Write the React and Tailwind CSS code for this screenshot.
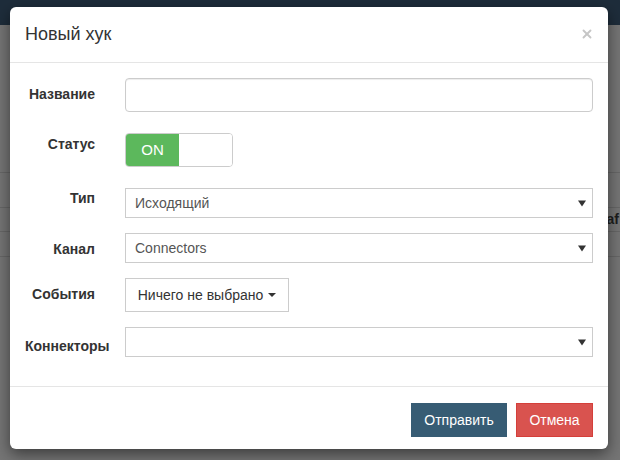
import { X } from "lucide-react";

const font = { fontFamily: '"Liberation Sans", Arial, sans-serif' };

function Caret({ className = "" }) {
  return (
    <svg width="8" height="7" viewBox="0 0 8 7" className={className}>
      <path d="M0 0.5h8L4 6.5z" fill="#333" />
    </svg>
  );
}

function SelectBox({ value }) {
  return (
    <div className="flex h-[30px] w-full items-center justify-between border border-[#ccc] bg-white pl-[9px] pr-[6px] text-[14px] text-[#555]">
      <span>{value}</span>
      <Caret />
    </div>
  );
}

function Row({ label, pt, children, className = "" }) {
  return (
    <div className={`flex items-start ${className}`}>
      <div
        className={`w-[70px] shrink-0 whitespace-nowrap text-right text-[14px] font-bold leading-5 text-[#333] ${pt}`}
      >
        {label}
      </div>
      <div className="ml-[30px] min-w-0 flex-1">{children}</div>
    </div>
  );
}

export default function App() {
  return (
    <div className="relative h-[460px] w-[620px] overflow-hidden bg-[#757575]" style={font}>
      {/* page behind the overlay */}
      <div className="h-[25px] bg-[#1e2d3b]" />
      <div className="h-[147px]" />
      <div className="h-[35px] border-t border-[#676767]" />
      <div className="flex h-[24px] items-center justify-end border-t border-[#676767] pr-[1px]">
        <span className="text-[14px] font-bold text-[#1d1d1d]">af</span>
      </div>
      <div className="h-[25px] border-t border-[#676767]" />
      <div className="border-t border-[#676767]" />

      {/* modal */}
      <div className="absolute left-[10px] top-[7px] w-[598px] rounded-[6px] bg-white shadow-[0_5px_15px_rgba(0,0,0,0.5)]">
        <div className="flex items-center justify-between border-b border-[#e5e5e5] pb-[15px] pl-[15px] pr-[14px] pt-[14px]">
          <h4 className="text-[18px] leading-[26px] text-[#333]">Новый хук</h4>
          <X size={14} strokeWidth={3.2} className="text-[#c6c6c6]" />
        </div>

        <div className="px-[15px] pb-[15px] pt-[15px]">
          <Row label="Название" pt="pt-[6px]">
            <div className="h-[34px] w-full rounded-[4px] border border-[#ccc] shadow-[inset_0_1px_1px_rgba(0,0,0,0.075)]" />
          </Row>

          <Row label="Статус" pt="pt-[1px]" className="mt-[21px]">
            <div className="flex h-[34px] w-[108px] overflow-hidden rounded-[4px] border border-[#ccc]">
              <div className="flex w-[53px] items-center justify-center bg-[#5cb85c] text-[15px] text-white">
                ON
              </div>
              <div className="flex-1 bg-white" />
            </div>
          </Row>

          <Row label="Тип" pt="pt-0" className="mt-[21px]">
            <SelectBox value="Исходящий" />
          </Row>

          <Row label="Канал" pt="pt-[6px]" className="mt-[15px]">
            <SelectBox value="Connectors" />
          </Row>

          <Row label="События" pt="pt-[6px]" className="mt-[15px]">
            <div className="inline-flex h-[34px] w-[164px] items-center justify-center gap-[5px] border border-[#ccc] bg-white text-[14px] text-[#333]">
              <span>Ничего не выбрано</span>
              <svg width="8" height="4" viewBox="0 0 8 4">
                <path d="M0 0h8L4 4z" fill="#333" />
              </svg>
            </div>
          </Row>

          <Row label="Коннекторы" pt="pt-[9px]" className="mt-[15px]">
            <SelectBox value="" />
          </Row>
        </div>

        <div className="mt-[14px] flex justify-end gap-[9px] border-t border-[#e5e5e5] px-[15px] pb-[12px] pt-[16px]">
          <button className="h-[34px] w-[96px] bg-[#375c74] text-[14px] text-white">
            Отправить
          </button>
          <button className="h-[34px] w-[77px] border border-[#d43f3a] bg-[#d9534f] text-[14px] text-white">
            Отмена
          </button>
        </div>
      </div>
    </div>
  );
}
